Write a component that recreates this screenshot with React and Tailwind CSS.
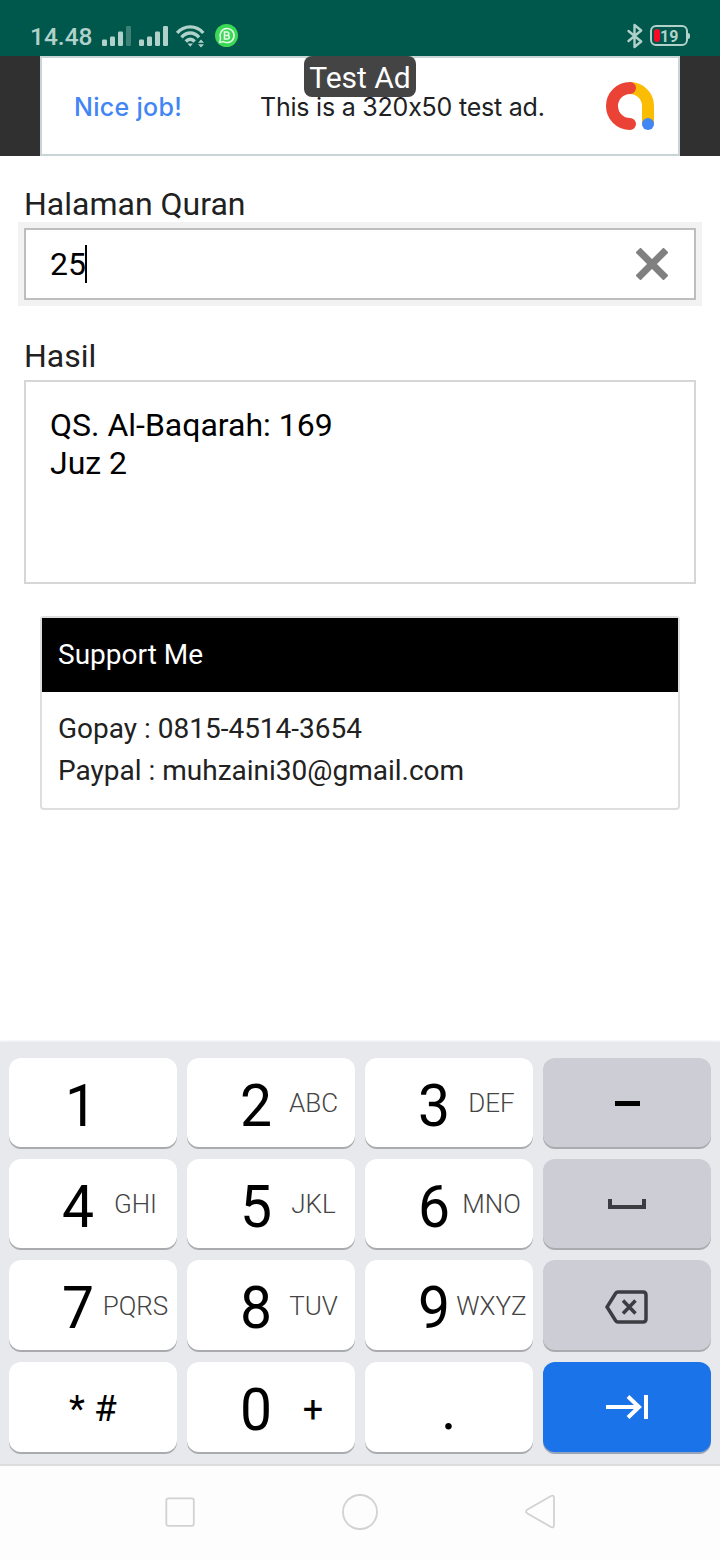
import React from "react";

const SignalBars = ({ last }) => (
  <svg width="29" height="22" viewBox="0 0 29 22" fill="#b0d2cb">
    <rect x="0" y="14.500" width="5" height="6.500" rx="1.200" />
    <rect x="8" y="11.500" width="5" height="9.500" rx="1.200" />
    <rect x="16" y="6.500" width="5" height="14.500" rx="1.200" />
    <rect x="24" y="1" width="5" height="20" rx="1.200" fill={last} />
  </svg>
);

function StatusBar() {
  return (
    <div className="flex h-14 items-start bg-[#00574b] pl-[30px] text-[#b0d2cb]">
      <span className="mt-[23px] w-[72px] whitespace-nowrap text-[24.5px] leading-[28px] font-medium">14.48</span>
      <div className="mt-[25px] flex">
        <SignalBars last="#3d8076" />
        <div className="ml-[8px] flex">
          <SignalBars last="#b0d2cb" />
        </div>
      </div>
      <svg className="mt-[24px] ml-[8px]" width="30" height="24" viewBox="0 0 30 24" fill="none" stroke="#b0d2cb" strokeWidth="3.400">
        <path d="M1.200 9C8 .8 20.500 .8 27.300 9" />
        <path d="M5.500 13.400C10.500 7.600 18 7.600 23 13.400" />
        <path d="M9.800 17.500C12.500 14.500 16 14.500 18.700 17.500" />
        <path d="M11.500 19.500h5.500l-2.750 3.200z" fill="#b0d2cb" stroke="none" />
        <path d="M22 18.700l3-3.200 3 3.200zM22 20.200l3 3.200 3-3.200z" fill="#b0d2cb" stroke="none" />
      </svg>
      <svg className="mt-[24px] ml-[9px]" width="24" height="24" viewBox="0 0 24 24">
        <circle cx="11.500" cy="11.500" r="11.500" fill="#3bd856" />
        <path d="M4.800 18.400l.7-4.400A7 7 0 1 1 8.500 17.600z" fill="none" stroke="#e6fbe9" strokeWidth="1.500" />
        <path d="M9.500 8h2.600a1.700 1.700 0 0 1 0 3.500H9.500zM9.500 11.500h3a1.750 1.750 0 0 1 0 3.500H9.500z" fill="none" stroke="#e6fbe9" strokeWidth="1.600" />
      </svg>
      <svg className="mt-[23px] ml-auto" width="18" height="26" viewBox="0 0 18 26" fill="none" stroke="#b0d2cb" strokeWidth="2.400" strokeLinejoin="round" strokeLinecap="round">
        <path d="M2.500 8L15.200 18.500L8.500 24V2L15.200 7.500L2.500 18" />
      </svg>
      <div className="mt-[25px] mr-[30px] ml-[6px] flex items-center">
        <div className="flex h-[21px] w-[38px] items-center rounded-[6px] border-2 border-[#b0d2cb] pl-[2px]">
          <div className="h-[13px] w-[6px] rounded-[3px] bg-[#fb0a25]" />
          <span className="mt-px text-[16px] leading-[17px] font-bold">19</span>
        </div>
        <div className="h-[6px] w-[2px] rounded-r-sm bg-[#b0d2cb]" />
      </div>
    </div>
  );
}

function AdBanner() {
  return (
    <div className="relative flex h-[100px] justify-center bg-[#303030] font-['Inter',sans-serif] [font-feature-settings:'calt'_0]">
      <div className="flex w-[640px] items-start border-2 border-[#c9d4d6] bg-white">
        <span className="mt-[33px] ml-[32px] w-[186px] whitespace-nowrap text-[25px] leading-[32px] font-medium tracking-[0.3px] text-[#4285f4]">Nice job!</span>
        <span className="mt-[33px] whitespace-nowrap text-[25px] leading-[32px] tracking-[-0.22px] text-[#202124]">This is a 320x50 test ad.</span>
        <svg className="mt-[23px] mr-[23px] ml-auto" width="50" height="50" viewBox="0 0 50 50" fill="none">
          <path d="M25 7A18 18 0 0 1 43 25V43" stroke="#fbbc04" strokeWidth="12" />
          <path d="M25 7A18 18 0 1 0 25 43" stroke="#ea4335" strokeWidth="12" strokeLinecap="round" />
          <circle cx="43" cy="43" r="6" fill="#4285f4" />
        </svg>
      </div>
      <div className="absolute top-0 left-[304px] h-[41px] w-[112px] rounded-[8px] bg-[#444] text-center font-['Roboto',sans-serif] text-[30px] leading-[44px] whitespace-nowrap text-white">
        Test Ad
      </div>
    </div>
  );
}

function PageForm() {
  return (
    <div className="flex h-[886px] flex-col bg-white px-6 text-[#212121]">
      <label className="mt-[28px] pt-px text-[32px] leading-[39px] whitespace-nowrap">Halaman Quran</label>
      <div className="mt-[4px] flex h-[72px] items-center border-2 border-[#bdbdbd] bg-white pl-6 text-black shadow-[0_0_0_6px_#f2f2f2]">
        <span className="text-[32px] leading-[38px]">25</span>
        <div className="-ml-[1px] h-[38px] w-[2px] bg-black" />
        <svg className="mr-[26px] ml-auto" width="32" height="32" viewBox="0 0 32 32" fill="none" stroke="#808080" strokeLinejoin="round">
          <path d="M4.500 4.500L27.500 27.500M27.500 4.500L4.500 27.500" strokeWidth="7" strokeLinecap="square" />
        </svg>
      </div>
      <label className="mt-[36px] pt-px text-[32px] leading-[39px]">Hasil</label>
      <div className="mt-[4px] h-[204px] border-2 border-[#d6d6d6] px-6 pt-[24px] text-[32px] leading-[38px] text-black">
        <div>QS. Al-Baqarah: 169</div>
        <div>Juz 2</div>
      </div>
      <div className="mx-4 mt-[32px] h-[194px] rounded-[4px] border-2 border-[#dedede] text-[28px] leading-[42px]">
        <div className="h-[74px] bg-black px-4 pt-[16px] text-white">Support Me</div>
        <div className="px-4 pt-[16px]">
          <div>Gopay : 0815-4514-3654</div>
          <div>Paypal : muhzaini30@gmail.com</div>
        </div>
      </div>
    </div>
  );
}

const Key = ({ children }) => (
  <div className="flex items-start rounded-[12px] bg-white shadow-[0_2px_0_#a9abae]">{children}</div>
);

const Digit = ({ children }) => (
  <span className="mt-[18px] w-[34px] origin-left scale-x-95 text-[60px] leading-[60px] text-black">{children}</span>
);

const DigitKey = ({ digit, letters, tall }) => (
  <Key>
    <div className={letters ? "flex pl-[53px]" : "flex pl-[56px]"}>
      <Digit>{digit}</Digit>
    </div>
    <span className={`${tall ? "mt-[33px]" : "mt-[32px]"} w-[79px] text-center text-[26px] leading-[26px] font-light text-[#444]`}>{letters}</span>
  </Key>
);

const ActionKey = ({ children }) => (
  <div className="flex items-center justify-center rounded-[12px] bg-[#cccdd5] shadow-[0_2px_0_#a9abae]">{children}</div>
);

function Keyboard() {
  return (
    <div className="h-[422px] bg-[#e8e9ed] px-[9px] pt-4 shadow-[0_-1px_2px_#e8e9ed]">
      <div className="grid grid-cols-4 grid-rows-[89px_89px_90px_90px] gap-x-[10px] gap-y-3">
        <DigitKey digit="1" />
        <DigitKey digit="2" letters="ABC" />
        <DigitKey digit="3" letters="DEF" />
        <ActionKey>
          <div className="mt-[2px] h-[5px] w-[25px] bg-black" />
        </ActionKey>
        <DigitKey digit="4" letters="GHI" />
        <DigitKey digit="5" letters="JKL" />
        <DigitKey digit="6" letters="MNO" />
        <ActionKey>
          <div className="mt-[1px] h-[10px] w-[38px] border-x-[4px] border-b-[4px] border-[#3c3d43]" />
        </ActionKey>
        <DigitKey digit="7" letters="PQRS" tall />
        <DigitKey digit="8" letters="TUV" tall />
        <DigitKey digit="9" letters="WXYZ" tall />
        <ActionKey>
          <svg className="mt-[4px]" width="44" height="34" viewBox="0 0 44 34" fill="none" stroke="#3c3d43" strokeWidth="3.500">
            <path d="M13 2H38Q41 2 41 5V29Q41 32 38 32H13Q11.500 32 10.500 30.500L2 17L10.500 3.500Q11.500 2 13 2Z" />
            <path d="M18 10.500L30.500 23.500M30.500 10.500L18 23.500" />
          </svg>
        </ActionKey>
        <Key>
          <span className="mt-[28px] ml-[60px] text-[37px] leading-[38px] whitespace-nowrap text-black">* #</span>
        </Key>
        <Key>
          <div className="flex pl-[53px]">
            <Digit>0</Digit>
          </div>
          <span className="mt-[29px] w-[78px] text-center text-[36px] leading-[38px] text-black">+</span>
        </Key>
        <Key>
          <span className="mt-[17px] ml-[76px] text-[59px] leading-[60px] text-black">.</span>
        </Key>
        <div className="flex items-center justify-center rounded-[12px] bg-[#1a73e8] shadow-[0_2px_0_#96a3b8]">
          <svg width="44" height="26" viewBox="0 0 44 26" fill="none" stroke="white" strokeWidth="4">
            <path d="M1 13H34M23 2.500L34 13L23 23.500M41 1V25" />
          </svg>
        </div>
      </div>
    </div>
  );
}

function NavBar() {
  return (
    <div className="relative flex h-24 justify-between border-t-2 border-[#dcdddf] bg-[#fdfdfd] px-[160px]">
      <svg className="mt-[26px]" width="40" height="40" viewBox="0 0 40 40" fill="none" stroke="#d2d2d2" strokeWidth="1.800">
        <rect x="6.300" y="6.300" width="27.500" height="27.500" rx="2" />
      </svg>
      <svg className="mt-[26px]" width="40" height="40" viewBox="0 0 40 40" fill="none" stroke="#d2d2d2" strokeWidth="1.800">
        <circle cx="20" cy="20" r="17" />
      </svg>
      <svg className="mt-[26px]" width="40" height="40" viewBox="0 0 40 40" fill="none" stroke="#d2d2d2" strokeWidth="1.800">
        <path d="M31 4Q34 2.500 34 6V33Q34 36.500 31 35L7.500 21.500Q4.500 19.500 7.500 17.500Z" />
      </svg>
    </div>
  );
}

export default function App() {
  return (
    <div className="flex w-[720px] flex-col bg-white font-['Roboto',sans-serif]">
      <StatusBar />
      <AdBanner />
      <PageForm />
      <Keyboard />
      <NavBar />
    </div>
  );
}
